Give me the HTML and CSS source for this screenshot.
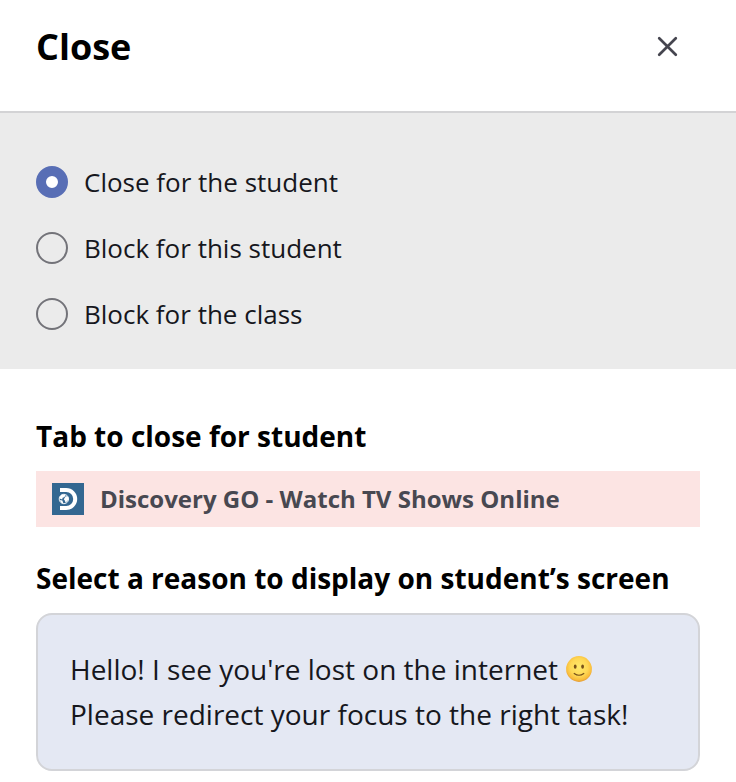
FILE: index.html
```html
<!DOCTYPE html>
<html lang="en">
<head>
<meta charset="utf-8">
<title>Close</title>
<link rel="stylesheet" href="styles.css">
</head>
<body>
<main class="dialog">
  <header class="dialog-header">
    <h1 class="title"><span>Close</span></h1>
    <button class="close" type="button" aria-label="Close">
      <svg width="20" height="20" viewBox="0 0 20 20"><path d="M1.2 1.2 17.8 17.8M17.8 1.2 1.2 17.8"/></svg>
    </button>
  </header>
  <section class="options">
    <label class="option"><input class="radio" type="radio" name="scope" checked><span class="option-text">Close for the student</span></label>
    <label class="option"><input class="radio" type="radio" name="scope"><span class="option-text">Block for this student</span></label>
    <label class="option"><input class="radio" type="radio" name="scope"><span class="option-text">Block for the class</span></label>
  </section>
  <section class="content">
    <h2 class="heading"><span>Tab to close for student</span></h2>
    <div class="tab">
      <svg class="favicon" width="32" height="32" viewBox="0 0 32 32">
        <rect width="32" height="32" fill="#336791"/>
        <path d="M8 5h6.2a11 11 0 0 1 0 22H8v-4h6.2a7 7 0 0 0 0-14H8z" fill="#fff"/>
        <circle cx="11.9" cy="16" r="4.7" fill="#336791" stroke="#fff" stroke-width=".9"/>
        <path d="M7.5 14 9.5 11.8 13 11.6 13.6 12.6 12.2 14.3 10.6 14.7 10.2 16.4 7.6 15.6zM13.9 13 16.3 14 16.3 17 13.6 19.8 12.8 17.4 11.8 16.2zM7.8 17 10.4 17.6 11.4 20.4 9.3 19.8z" fill="#fff"/>
      </svg>
      <span class="tab-title">Discovery GO - Watch TV Shows Online</span>
    </div>
    <h2 class="heading reason"><span>Select a reason to display on student’s screen</span></h2>
    <div class="message">
      <div class="line"><span>Hello! I see you're lost on the internet</span>
        <svg class="emoji" width="26" height="26" viewBox="0 0 26 26" role="img" aria-label="slightly smiling face">
          <defs>
            <radialGradient id="face" cx=".5" cy=".43" r=".57"><stop offset="0" stop-color="#ffe96b"/><stop offset=".6" stop-color="#fed754"/><stop offset=".86" stop-color="#f9bd3c"/><stop offset="1" stop-color="#e39a35"/></radialGradient>
          </defs>
          <circle cx="13" cy="13" r="12.9" fill="url(#face)"/>
          <ellipse cx="9.2" cy="10.6" rx="1.4" ry="2.2" fill="#765019"/>
          <ellipse cx="16.6" cy="10.6" rx="1.4" ry="2.2" fill="#765019"/>
          <path d="M8.2 17.5Q13 21 17.8 17.5" fill="none" stroke="#765019" stroke-width="1.2" stroke-linecap="round"/>
        </svg>
      </div>
      <div class="line"><span>Please redirect your focus to the right task!</span></div>
    </div>
  </section>
</main>
</body>
</html>
```
FILE: styles.css
```css
* { box-sizing: border-box; }
body {
  margin: 0;
  background: #fff;
  color: #16171d;
  font-family: "Open Sans", sans-serif;
}
.dialog { height: 782px; overflow: hidden; }
.dialog-header {
  display: flex;
  justify-content: space-between;
  height: 113px;
  padding: 23px 58px 0 36px;
  border-bottom: 2px solid #d3d3d5;
}
.title { margin: 0; color: #000; font-size: 36px; line-height: 48px; font-weight: 700; }
.close { width: 20px; height: 20px; margin-top: 14px; padding: 0; border: 0; background: none; }
.close svg { display: block; overflow: visible; fill: none; stroke: #45454f; stroke-width: 2.7; stroke-linecap: round; }
.options {
  display: flex;
  flex-direction: column;
  gap: 34px;
  height: 256px;
  padding: 53px 36px 0;
  background: #ebebeb;
}
.option { display: flex; align-items: center; gap: 16px; height: 32px; }
.radio {
  appearance: none;
  width: 32px;
  height: 32px;
  margin: 0;
  border: 2px solid #737379;
  border-radius: 50%;
}
.radio:checked { border: 10px solid #586eb5; background: #fff; }
.option-text { font-size: 26px; line-height: 34px; }
.content { padding: 47px 36px 0; }
.heading { margin: 0; color: #000; font-size: 28px; line-height: 40px; font-weight: 700; }
.tab {
  display: flex;
  align-items: center;
  gap: 16px;
  height: 56px;
  margin-top: 15px;
  padding-left: 16px;
  background: #fce4e3;
}
.tab-title { color: #484851; font-size: 24px; line-height: 32px; font-weight: 700; }
.reason { margin-top: 31px; }
.message {
  height: 158px;
  margin-top: 15px;
  padding: 32px 32px 0;
  border: 2px solid #d3d4d8;
  border-radius: 16px;
  background: #e4e8f3;
  font-size: 28px;
}
.line { display: flex; align-items: center; gap: 8px; height: 45px; line-height: 45px; white-space: nowrap; }
.emoji { margin-bottom: 2px; }
```
